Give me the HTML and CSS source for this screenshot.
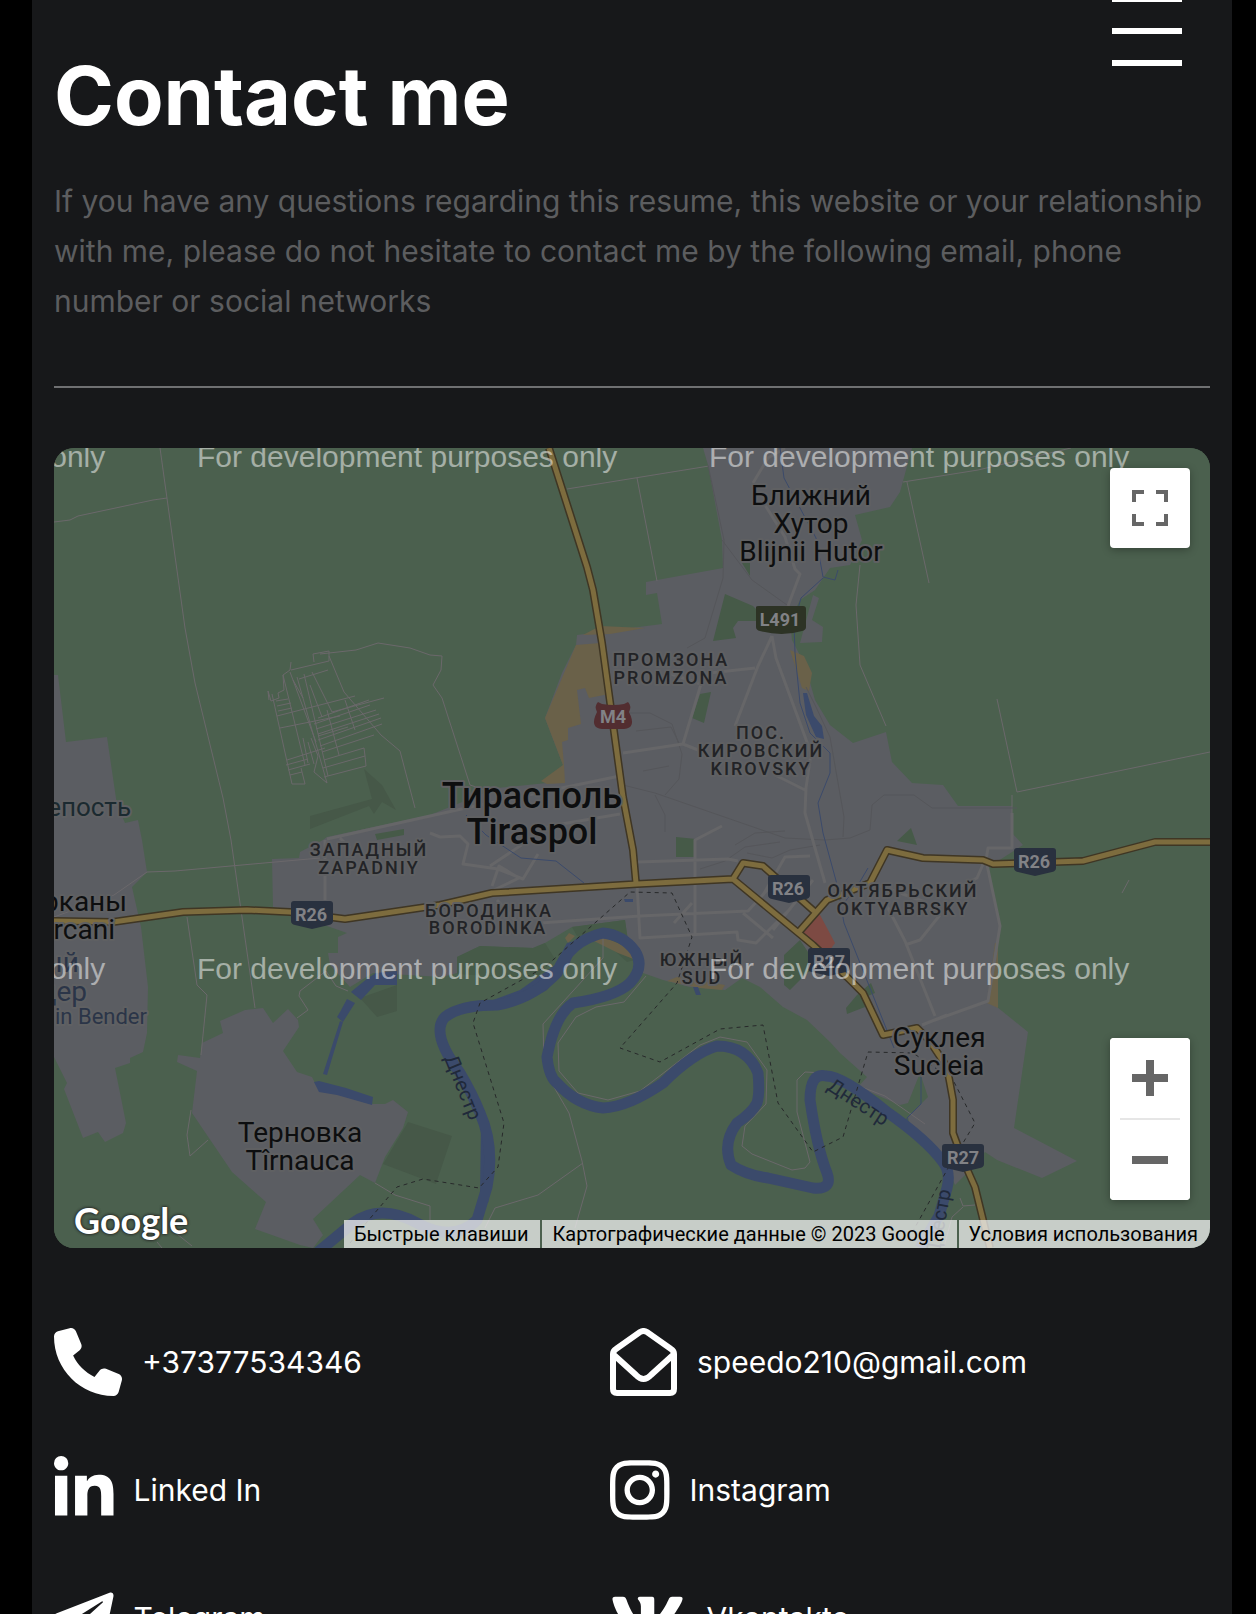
FILE: index.html
```html
<!DOCTYPE html>
<html lang="en">
<head>
<meta charset="utf-8">
<meta name="viewport" content="width=device-width, initial-scale=1">
<title>Contact me</title>
<link rel="stylesheet" href="styles.css">
</head>
<body>
<div class="page">
  <button class="menu" type="button" aria-label="Menu"><span></span><span></span><span></span></button>
  <main class="contact">
    <h1 class="title">Contact me</h1>
    <p class="lead">If you have any questions regarding this resume, this website or your relationship with me, please do not hesitate to contact me by the following email, phone number or social networks</p>
    <hr class="divider">

    <section class="map" aria-label="Map">
      <svg class="map-canvas" viewBox="54 448 1156 800" preserveAspectRatio="xMidYMid slice">
        <rect class="field" x="54" y="448" width="1156" height="800"/>

        <!-- towns -->
        <g class="town">
          <path d="M54 675h4l8 67 41-5 10 68 8 18 13-3 4 20 5 32-15 15 9 40 7 60-1 46-4 19-13 6v5l-15 5 11 55-3 10-18 9-7-10-15 6-19-49 3-6-13-26z"/>
          <path d="M220 1021l25-11 18-2 10 15 15-14 10 11 1 7-16 24 14 21 15 5 5 10 53 17h15l8-4 15 12-5 16-18 29-10 26-15-8-47 44 10 16-10 13-13-3-45-16 11-27-34-30-40-59 5-42-20-9 1-7 22 3 2-15 21-10z"/>
          <path d="M703 448l5 17 14 75 1 28-77 14v13l11-2 5 31-85 11-1 10-14 28-17 45 18 47-16 18-50 5-67 27-103 22-4 3-23 12-1 6-27 1 1 48 74 26-9 4v16h-10l2 12 20 22 23-14 69 4 15-4v-16l23-11 53 2 12-5 27-16 53-7 2 17 16 21v15l20 7 27 7 35 3 17-12 18 9 23 20 24 13 23 22 10 11 27 24-9 10 42 18 8-2 12-30 8 24-20 20 2 10 32 26 13 32 12-12 18-21 12 8 45 18 35-17-63-33 14-96-31-25 1-64 2-16-13-59 36-23-11-12v-27h-54l-15-21-31-2-20-21-6-30-33 11-23-18-15-25-10-35-13-25-2-20 10-20 15-10 15-22 20-3 12-25-7-25 35-8 10-15 12-44z"/>
          <path d="M813 595l6 3-7 22 11 7-1 15-22 1z"/>
        </g>

        <!-- parks and woods -->
        <g class="park">
          <path d="M725 594l28 12 12 12-3 3-24 0-5 7 3 10-23 3zM700 694l11-2-7 31-12-5zM676 837l20 2-1 18h-19zM742 563h8v13zM897 841l14-13 6 17zM857 995l14-12 4 10-12 5 2 9-18 7-1-6zM784 955l16-15 20 30-12 2-18 18-6-5zM572 927l53-7 3 20 15 18-16 4-20-18-30-8zM457 957l23-11 53 2 12-5 10 16-20 20-78-5zM375 834l29-5v6l-27 5z"/>
          <path class="wood" d="M310 816l62-17-8-30 18 16 14 25-14-8-8 12-5-8-59 23zM360 998l37-13v26l-20 6zM408 1122l44 14-16 48-53-20z"/>
        </g>
        <path class="sand" d="M583 635l17-9 45 2-35 6zM576 645l24-2 9 51-20 4-4-10-8 2 4 34-13 4v12l-6 2 2 23 1 18-18 1-6-3 22-16-18-47zM790 650l14 6 8 17-3 18-7-3zM995 943h3v65l-11-5zM565 938l4-5 6 3-7 7zM592 940l12-3 27 12 5 11-18-7zM667 981l10-4 48 8-3 5-22-2z"/>
        <path class="hospital" d="M802 933l17-20 16 30-10 14z"/>

        <!-- tracks and local streets -->
        <g class="track">
          <path d="M160 448l25 180 10 55 28 115 8 42 24 168M54 522l16-2 8-4 75-16 14-2M187 917l10 68 10 10-6 60M191 1110l-4 25 3 21 18-16M320 858l-145 13-28 1-33 23-60 22M297 1018l11-8-9-14 1-5 26-20 10 15 12 5M567 489l142-23M637 478l20 103M903 482l75-12 93-22M907 482l22 101M860 565l-4 40 4 60 26 61M997 699l20 93 193-40M1012 795v20M1122 893l7-13M430 655l12 1-1 14-8 15 9 13 28 87 15 5M320 654l36-4 22-7 32 5 20 7M162 1248l-5-6M192 1246l-15-12M375 1183l20 12 35 11v14"/>
          <path d="M603 938v20l-60 66 1 38 3 13 22 38 13 48 5 25-12 42M583 1163l-45 32-43 13-10 20M646 976l-22 26-28 5-20 10-18 26 1 28 19 22 30 7 32-9 60-46 20-8 27 5 20 28-1 34-21 22-3 20 10 8 40 16 13-2 5-6-13-50v-32l8-8 20 1 60 23 40 28M960 1198l3 8 12-1M963 1207l-11 10-8 30"/>
          <path d="M291 670l38-9v-10l-16 3 1 8M291 662l-1 8-7 5 1 15-6 3 1 5-8 3-3-10 1 9M329 656l15 36 37 43 19 16 15 57M272 694l20 90h13l-4-16M283 675l22 90M297 677l30 106-13-11 4-16-7-18M290 672l26 70M304 674l24 102M312 672l20 40 52-14M293 680l10 18M276 701l12-2M277 706l14-3M278 711l14-3M277 716l78-20M299 679l29-9M310 685l12 32M318 736l30-9M280 728l60-12M286 765l22-6M288 770l22-6M290 775l12-3M318 718l51-18M314 724l56-19M316 729l60-19M318 734l61-20M318 740l63-22M320 746l62-22M322 752l52-17M324 760l40-12 1 8M323 768l42-12 1 10-42 11M287 760l38-12M345 700l10 30M327 710l12 45M303 738l5 25M308 742l6 22"/>
        </g>
        <g class="rail">
          <path d="M708 465l16 75-1 38-18 60-18 10M722 540l30 40 35 25M623 785l32 8 130 45 40 2 25-2 20-8 2-25 12-10h30l18 13h85M630 713h20l22 11 10 30-3 25-14 16M636 731l35-4 8 16M643 771l26-5M655 795l10 20v17M843 837l1-20-14-80-14-30-10-20M735 845l20-12 30-2M700 869l25-8 20-14 35-5M820 845l-30 5-18 8-25-5"/>
        </g>
        <g class="street">
          <path d="M327 839l103-23 45-10 135-28 10-2M340 838l10 10M325 840v60M430 833l10 4 20-1 8 8-5 20 35 5 25 10 15-25M492 886l7-20 20 12-25 12M490 866l60-40 70-12M623 753l60-9 20 8M683 744l18-60-30-10M710 673l45-5M772 636l-14 30-23 60M772 636l4 22 35 95-5 35-1 25 20 70M775 775l30 15M638 862l90-3 10 2M695 890v-50l27-14M637 884l3 54 97-6 1 8 18 3 35-35M695 890v46M540 923l100-7 108-5 32-35M743 913l30 25M773 930l40-50M763 895l22-38 25-1M497 900l18 20M692 903l-18 20M875 884l50 18M887 906l18 35 30 75M905 945l15-5 20-25M935 1020l53-19 12-75-14-66 2-12h24v-35M987 855l-10 23-20 10M922 1025l25-10M753 483l15-25 17-10M765 505l20 32 10 32 5 5-12 32"/>
        </g>

        <!-- water -->
        <g class="stream">
          <path d="M780 448l4 30 16 30 16 30 7 39 12 3 3-10M823 578l-22 20-7 25 1 30 5 50 10 30 20 20v20l-12 30 5 30 15 55 6 35 38 95 12 30M868 868l-10 17-14 18M921 1076v28l-14 14v10M466 815l20 20 35 23 35 3 28 22"/>
        </g>
        <g class="water">
          <path d="M803 693l4 0 7 23 8 10 2 13-8-2-10-22zM352 991l16-13 8-5 21-2v14h-22l-14 15-10-8zM340 1012l7-13 8 4-12 19-6-5zM340 1021l3 1-16 53-4-1zM314 1082l5-1 27 7 27 9-1 8-35-10-18-3zM693 987h5l3 8h-5zM624 899h9v3h-8z"/>
          <path d="M485 1003l35-13 35-25 12-22 12-3-10 25-22 25-18 10-30 10zM481 1125l10 18 4 20-7 40-8-10z"/>
          <path class="river" d="M318 1252l35-29q27-20 64 0t60-3l10-33q8-40-7-74-8-20-20-40-30-40-15-56 15-12 52-12 35-6 60-32 12-32 46-40 20 2 32 18 10 16-5 32-15 14-57 20-18 12-26 54 2 20 10 26 20 22 46 25 25-1 60-25 30-30 54-37 30 0 41 27 2 20-1 30-5 10-20 20-15 20-6 42 15 10 37 13l45 10q20 2 14-15-10-25-17-73 0-28 16-24 17 0 61 36 40 28 56 50 8 10 4 26l-8 28-19 32"/>
        </g>

        <path class="border" d="M350 1243L367 1222 397 1187 423 1179 479 1188 498 1167 504 1123 473 1023 480 1003 545 967 630 892 672 893 692 937 677 983 620 1048 660 1062 720 1029 763 1025 778 1103 813 1152 843 1137 868 1052 913 1053 953 1080 975 1123 963 1143 947 1170 908 1240"/>

        <!-- highways -->
        <g class="highway-edge">
          <path id="hw" d="M549 448l38 119 6 23 9 53 21 154 10 53 3 33M54 921l59 1 70-10 64-2 43 2 55 7 95-14 52-12 145-9 96-5 10-16 20 3 52 46M733 879l80 66 34 32 16 16 20 42 34-7 12 12 18 27 6 33v33l10 27 12 27 15 61M798 933l29-33 43-17 17-33 36 8 60 2 10 4 90-3 72-19h55"/>
        </g>
        <use class="highway" href="#hw"/>

        <!-- route shields -->
        <g class="shield">
          <path class="shield-l" d="M756 607q0-1 3-1h44q3 0 3 3v18q0 3-4 4-20 6-42 0-4-1-4-4z"/><text x="780" y="626">L491</text>
          <path class="shield-m" d="M598 702l4 2q12 2 22 0l4-2q4 4 1 10 8 16-5 17h-22q-13-1-5-17-3-6 1-10z"/><text x="613" y="723">M4</text>
          <g id="r"><path d="M291 904q0-3 3-3h36q3 0 3 3v17q0 3-4 4l-17 4-17-4q-4-1-4-4z"/></g><text x="311" y="921">R26</text>
          <use href="#r" x="477" y="-26"/><text x="788" y="895">R26</text>
          <use href="#r" x="723" y="-53"/><text x="1034" y="868">R26</text>
          <use href="#r" x="517" y="47"/><text x="829" y="968">R27</text>
          <use href="#r" x="651" y="243"/><text x="963" y="1164">R27</text>
        </g>

        <!-- place names -->
        <g class="label label-city"><text x="532" y="808">Тирасполь</text><text x="532" y="844">Tiraspol</text></g>
        <g class="label label-town">
          <text x="811" y="505">Ближний</text><text x="811" y="533">Хутор</text><text x="811" y="561">Blijnii Hutor</text>
          <text x="300" y="1142">Терновка</text><text x="300" y="1170">Tîrnauca</text>
          <text x="939" y="1047">Суклея</text><text x="939" y="1075">Sucleia</text>
        </g>
        <g class="label label-edge"><text x="127" y="911">Парканы</text><text x="115" y="939">Parcani</text></g>
        <g class="label label-sight"><text class="dark" x="131" y="816">Крепость</text><text x="79" y="972">ый</text><text x="87" y="1001">дер</text><text class="small" x="147" y="1024">in Bender</text></g>
        <g class="label label-area">
          <text x="671" y="666">ПРОМЗОНА</text><text x="671" y="684">PROMZONA</text>
          <text x="761" y="739">ПОС.</text><text x="761" y="757">КИРОВСКИЙ</text><text x="761" y="775">KIROVSKY</text>
          <text x="369" y="856">ЗАПАДНЫЙ</text><text x="369" y="874">ZAPADNIY</text>
          <text x="489" y="917">БОРОДИНКА</text><text x="488" y="934">BORODINKA</text>
          <text x="702" y="966">ЮЖНЫЙ</text><text x="702" y="984">SUD</text>
          <text x="903" y="897">ОКТЯБРЬСКИЙ</text><text x="903" y="915">OKTYABRSKY</text>
        </g>
        <g class="label-river">
          <text transform="translate(444 1058) rotate(68)">Днестр</text>
          <text transform="translate(826 1089) rotate(33)">Днестр</text>
          <text transform="translate(939 1258) rotate(-80)">Днестр</text>
        </g>
        <g class="watermark">
          <text x="-315" y="467">For development purposes only</text><text x="197" y="467">For development purposes only</text><text x="709" y="467">For development purposes only</text>
          <text x="-315" y="979">For development purposes only</text><text x="197" y="979">For development purposes only</text><text x="709" y="979">For development purposes only</text>
        </g>
      </svg>

      <button class="control fullscreen" type="button" aria-label="Fullscreen">
        <svg viewBox="0 0 18 18"><path d="M0 0v6h2V2h4V0H0zm16 0h-4v2h4v4h2V0h-2zm0 16h-4v2h6v-6h-2v4zM2 12H0v6h6v-2H2v-4z"/></svg>
      </button>
      <div class="zoom">
        <button class="control" type="button" aria-label="Zoom in"><svg viewBox="0 0 18 18"><path d="M18 7h-7V0H7v7H0v4h7v7h4v-7h7z"/></svg></button>
        <button class="control" type="button" aria-label="Zoom out"><svg viewBox="0 0 18 18"><path d="M0 7h18v4H0z"/></svg></button>
      </div>
      <a class="google" href="#map">Google</a>
      <div class="attribution">
        <button type="button">Быстрые клавиши</button>
        <span>Картографические данные © 2023 Google</span>
        <a href="#terms">Условия использования</a>
      </div>
    </section>

    <address class="links">
      <a href="tel:+37377534346"><svg viewBox="0 0 512 512"><path d="M164.9 24.6c-7.7-18.6-28-28.5-47.4-23.2l-88 24C12.1 30.2 0 46 0 64C0 311.4 200.6 512 448 512c18 0 33.8-12.1 38.6-29.5l24-88c5.3-19.4-4.6-39.7-23.2-47.4l-96-40c-16.3-6.8-35.2-2.1-46.3 11.6L304.7 368C234.3 334.7 177.3 277.7 144 207.3L193.3 167c13.7-11.2 18.4-30 11.6-46.3l-40-96z"/></svg>+37377534346</a>
      <a href="mailto:speedo210@gmail.com"><svg viewBox="0 0 67 68"><path class="line" d="M3 26q0-3 3-5L30 4q3.500-2 7 0l24 17q3 2 3 5v35q0 4-4 4H7q-4 0-4-4zM4 27l22 20q7.500 8 15 0l22-20"/></svg>speedo210@gmail.com</a>
      <a href="#linkedin"><svg viewBox="0 0 448 512"><path d="M100.28 448H7.4V148.9h92.88zM53.79 108.1C24.09 108.1 0 83.5 0 53.8a53.79 53.79 0 0 1 107.58 0c0 29.700-24.100 54.300-53.790 54.300zM447.900 448h-92.680V302.400c0-34.700-.7-79.200-48.290-79.200-48.290 0-55.690 37.700-55.690 76.700V448h-92.780V148.900h89.080v40.800h1.300c12.400-23.500 42.690-48.300 87.880-48.300 94 0 111.280 61.900 111.280 142.300V448z"/></svg>Linked In</a>
      <a href="#instagram"><svg viewBox="0 0 448 512"><path d="M224.1 141c-63.6 0-114.9 51.3-114.9 114.9s51.3 114.9 114.9 114.9S339 319.5 339 255.9 287.7 141 224.1 141zm0 189.6c-41.1 0-74.7-33.5-74.7-74.7s33.5-74.7 74.7-74.7 74.7 33.5 74.7 74.7-33.6 74.7-74.7 74.7zm146.4-194.3c0 14.9-12 26.8-26.8 26.8-14.9 0-26.8-12-26.8-26.8s12-26.8 26.8-26.8 26.8 12 26.8 26.8zm76.1 27.2c-1.7-35.9-9.9-67.7-36.2-93.9-26.2-26.2-58-34.4-93.9-36.2-37-2.1-147.9-2.1-184.9 0-35.8 1.7-67.6 9.9-93.9 36.1s-34.4 58-36.2 93.9c-2.1 37-2.1 147.9 0 184.9 1.7 35.9 9.9 67.7 36.2 93.9s58 34.4 93.9 36.2c37 2.1 147.9 2.1 184.9 0 35.9-1.7 67.7-9.9 93.9-36.2 26.2-26.2 34.4-58 36.2-93.9 2.1-37 2.1-147.8 0-184.8zM398.8 388c-7.8 19.6-22.9 34.7-42.6 42.6-29.5 11.7-99.5 9-132.1 9s-102.7 2.6-132.1-9c-19.6-7.8-34.7-22.9-42.6-42.6-11.7-29.5-9-99.5-9-132.1s-2.6-102.7 9-132.1c7.8-19.6 22.9-34.7 42.6-42.6 29.5-11.7 99.5-9 132.1-9s102.7-2.6 132.1 9c19.6 7.8 34.7 22.9 42.6 42.6 11.7 29.5 9 99.5 9 132.1s2.7 102.7-9 132.1z"/></svg>Instagram</a>
      <a href="#telegram"><svg viewBox="0 0 448 512"><path d="M446.7 98.6l-67.6 318.8c-5.1 22.5-18.4 28.1-37.3 17.5l-103-75.9-49.7 47.8c-5.5 5.5-10.1 10.1-20.7 10.1l7.4-104.9 190.9-172.5c8.3-7.4-1.8-11.5-12.9-4.1L117.8 284 16.2 252.2c-22.1-6.9-22.5-22.1 4.6-32.7L418.2 66.4c18.4-6.9 34.5 4.1 28.5 32.2z"/></svg>Telegram</a>
      <a href="#vk"><svg viewBox="0 0 576 512"><path d="M545 117.7c3.7-12.5 0-21.7-17.8-21.7h-58.9c-15 0-21.9 7.9-25.6 16.7 0 0-30 73.1-72.4 120.5-13.7 13.7-20 18.1-27.5 18.1-3.7 0-9.4-4.4-9.4-16.9V117.7c0-15-4.2-21.7-16.6-21.7h-92.6c-9.4 0-15 7-15 13.5 0 14.2 21.2 17.5 23.4 57.5v86.8c0 19-3.4 22.5-10.9 22.5-20 0-68.6-73.4-97.4-157.4-5.8-16.3-11.5-22.9-26.6-22.9H38.8c-16.8 0-20.2 7.9-20.2 16.7 0 15.6 20 93.1 93.1 195.5C160.4 378.1 229 416 291.4 416c37.5 0 42.1-8.4 42.1-22.9 0-66.8-3.4-73.1 15.4-73.1 8.7 0 23.7 4.4 58.7 38.1 40 40 46.6 57.9 69 57.9h58.9c16.8 0 25.3-8.4 20.4-25-11.2-34.9-86.9-106.7-90.3-111.5-8.7-11.2-6.2-16.2 0-26.2.1-.1 72-101.3 79.4-135.6z"/></svg>Vkontakte</a>
    </address>
  </main>
</div>
</body>
</html>
```
FILE: styles.css
```css
* { box-sizing: border-box; }
body { margin: 0; background: #000; font-family: Inter, sans-serif; }
button { border: 0; padding: 0; background: none; font: inherit; color: inherit; cursor: pointer; }
a { color: inherit; text-decoration: none; }

.page { position: relative; height: 100vh; overflow: hidden; margin: 0 24px 0 32px; background: #17181a; color: #fff; }
.menu { position: absolute; top: -4px; right: 50px; display: flex; flex-direction: column; gap: 26px; width: 70px; }
.menu span { height: 6px; background: #fff; }

.contact { padding: 48px 22px; }
.title { margin: 0; font-size: 81px; line-height: 96px; font-weight: 700; }
.lead { margin: 32px 0 60px; font-size: 30px; line-height: 50px; color: #5c5d5f; }
.divider { margin: 0 0 60px; border: 0; height: 2px; background: #6f7072; }

.map { position: relative; aspect-ratio: 289 / 200; border-radius: 20px; overflow: hidden; background: #4b604e; }
.map-canvas { display: block; width: 100%; height: 100%; font-family: Roboto, sans-serif; text-anchor: middle; }
.field { fill: #4b604e; }
.town { fill: #5b5d62; }
.park { fill: #465a48; }
.wood { fill: #465848; }
.sand { fill: #6a6149; }
.hospital { fill: #7d4a43; }
.track, .street, .rail, .stream, .highway-edge, .highway, .border, .river { fill: none; stroke-linejoin: round; }
.track { stroke: #6b686b; stroke-width: 1; }
.rail { stroke: #55565a; stroke-width: 1; }
.street { stroke: #666668; stroke-width: 3; }
.stream { stroke: #3b4a6b; stroke-width: 1; }
.water { fill: #3b4a6b; }
.water .river { fill: none; stroke: #3b4a6b; stroke-width: 11; }
.border { stroke: #27292a; stroke-width: 1; stroke-dasharray: 4 4; }
.highway-edge { stroke: #3f3624; stroke-width: 8; }
.shield { fill: #29313f; font-size: 18px; font-weight: 700; }
.shield text { fill: #818286; }
.shield .shield-l { fill: #2d3325; }
.shield .shield-m { fill: #522d30; }

.label { fill: #0d0e0f; stroke: #5f6062; stroke-width: 4; stroke-linejoin: round; paint-order: stroke; }
.label-city { font-size: 36px; font-weight: 500; }
.label-town, .label-edge { font-size: 28px; }
.label-edge, .label-sight { text-anchor: end; }
.label-sight { font-size: 28px; fill: #2b3548; }
.label-sight .dark { fill: #1b2a30; font-size: 26px; }
.label-sight .small { font-size: 22px; }
.label-area { font-size: 18px; font-weight: 500; letter-spacing: 2px; fill: #222326; }
.label-river { font-size: 20px; fill: #20293a; text-anchor: start; }
.watermark { font-family: "Liberation Sans", Arial, sans-serif; font-size: 30px; fill: #fff; fill-opacity: .5; text-anchor: start; }

/* the inner line of a highway, drawn over its dark edge */
.highway { stroke: #7d6c3e; stroke-width: 5; }

.control { display: grid; place-items: center; width: 80px; height: 80px; background: #fff; }
.control svg { width: 36px; height: 36px; fill: #666; }
.fullscreen { position: absolute; top: 20px; right: 20px; border-radius: 4px; box-shadow: 0 2px 8px rgba(0, 0, 0, .3); }
.zoom { position: absolute; right: 20px; bottom: 48px; border-radius: 4px; overflow: hidden; background: #fff; box-shadow: 0 2px 8px rgba(0, 0, 0, .3); }
.zoom .control + .control::before { content: ""; position: absolute; top: 80px; left: 10px; right: 10px; height: 2px; background: #e6e6e6; }
.zoom .control + .control { margin-top: 2px; }
.google { position: absolute; left: 20px; bottom: 6px; font: 700 36px/44px Lato, sans-serif; text-shadow: 0 0 3px #222, 0 0 3px #222; }
.attribution { position: absolute; right: 0; bottom: 0; display: flex; gap: 2px; font: 20px/28px Roboto, sans-serif; color: #000; white-space: nowrap; }
.attribution > * { padding: 0 12px 0 10px; background: rgba(245, 245, 245, .73); }

.links { display: grid; grid-template-columns: 1fr 1fr; gap: 60px 0; margin-top: 80px; padding-right: 44px; font-size: 30px; font-style: normal; line-height: 36px; }
.links a { display: flex; align-items: center; gap: 20px; }
.links svg { height: 68px; fill: #fff; }
.links .line { fill: none; stroke: #fff; stroke-width: 6; }
```
